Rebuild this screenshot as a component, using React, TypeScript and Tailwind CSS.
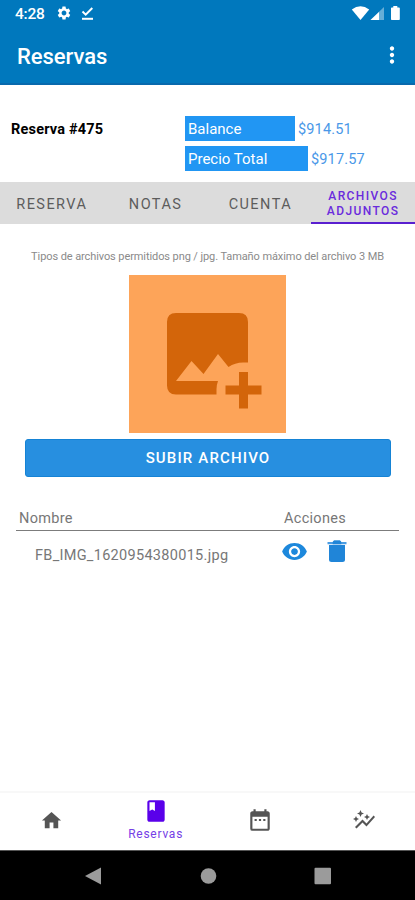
import {
  MdAutoGraph,
  MdBook,
  MdDateRange,
  MdHome,
  MdMoreVert,
  MdSettings,
  MdVisibility,
} from "react-icons/md";

const StatusBar = () => (
  <div className="h-7 flex items-center justify-between pl-[15px] pr-[14px] text-white">
    <div className="flex items-center">
      <span className="w-[41px] text-[15.5px] leading-7 font-medium tracking-[-0.2px]">4:28</span>
      <MdSettings size={16} className="-mt-[2px]" />
      <svg className="ml-[9px] -mt-[1px]" width="13" height="13" viewBox="0 0 13 13" fill="none" stroke="white" strokeWidth="2">
        <path d="M1.5 4.5 4.7 7.6 11.3 1" />
        <path d="M1 11.8h11" />
      </svg>
    </div>
    <svg width="50" height="16" viewBox="0 0 50 16" fill="white">
      <path d="M.8 3.4Q9.5-3 18.2 3.4L9.5 14z" />
      <path d="M33 1v13H19.5z" opacity=".4" />
      <path d="M28 6v8h-8.5z" />
      <path d="M42.3 0h4v1.5H48q.8 0 .8.8v11q0 .8-.8.8h-7.2q-.8 0-.8-.8v-11q0-.8.8-.8h1.5z" />
    </svg>
  </div>
);

const AmountRow = ({ label, value, barClass }: { label: string; value: string; barClass: string }) => (
  <div className="h-[25px] flex items-center text-[15px]">
    <div className={`h-[25px] pl-[3px] leading-[27px] bg-[#2196f3] text-white ${barClass}`}>
      {label}
    </div>
    <span className="pl-[3px] pt-[2px] text-[#4a98e8] text-[14.5px] tracking-[0.15px]">{value}</span>
  </div>
);

const Tabs = () => (
  <div className="h-[42px] grid grid-cols-4 bg-[#dcdcdc] text-[#5c5c5c] text-[14.5px] tracking-[1.45px]">
    <div className="flex items-center justify-center pt-[3px]">RESERVA</div>
    <div className="flex items-center justify-center pt-[3px]">NOTAS</div>
    <div className="flex items-center justify-center pt-[3px] pl-[2px]">CUENTA</div>
    <div className="flex items-center justify-center pt-[3px] text-center text-[12px] leading-[15px] font-medium tracking-[1.4px] text-[#6a2bdc] border-b-2 border-[#5a1fd0]">
      ARCHIVOS
      <br />
      ADJUNTOS
    </div>
  </div>
);

const ImagePlaceholder = () => (
  <svg className="mx-auto" width="157" height="158" viewBox="0 0 157 158">
    <path fill="#fda459" d="M0 0h157v158H0z" />
    <path
      fill="#d3650a"
      fillRule="evenodd"
      d="M47 38h63q9 0 9 9v40.5h-5q-8 0-14.5 4.5L89 79 74.5 99 62.5 86 47 106h42q-1.500 4-1.500 8v5.500H47q-9 0-9-9V47q0-9 9-9z"
    />
    <path fill="#d3650a" d="M110 97h9v13.5h13.5v9H119v14h-9v-14H96.500v-9H110z" />
  </svg>
);

const FileTable = () => (
  <div className="mx-4 mt-[30px] text-[#777777]">
    <div className="h-[23px] flex border-b border-[#7c7c7c] text-[14.5px] leading-[22px] tracking-[0.3px]">
      <span className="w-[268px] pl-[3px]">Nombre</span>
      <span>Acciones</span>
    </div>
    <div className="h-[44px] flex items-center">
      <span className="w-[265px] pl-[19px] pt-[5px] text-[14.5px] tracking-[0.3px]">
        FB_IMG_1620954380015.jpg
      </span>
      <MdVisibility size={27} className="text-[#1d88dc] -mt-[3px]" />
      <svg className="ml-[19px] -mt-[4px]" width="20" height="22" viewBox="0 0 20 22">
        <path fill="#2085d8" d="M2 5h16v14.500q0 2.500-2.500 2.500h-11Q2 22 2 19.500z" />
        <path fill="#4b9de3" d="M.5 2h5.200L7 .5h6L14.300 2h5.200v2.300H.5z" />
        <path fill="#2085d8" d="M7 .5h6L14.300 2v2.300H5.700V2z" />
      </svg>
    </div>
  </div>
);

const BottomNav = () => (
  <div className="h-[59px] grid grid-cols-4 items-center justify-items-center pb-[3px] bg-white border-t-2 border-[#f8f8f8] text-[#555555]">
    <MdHome size={23} />
    <div className="flex flex-col items-center text-[#5a00ea]">
      <MdBook size={26} />
      <span className="text-[12px] leading-[15px] mt-[3px] tracking-[0.75px] text-[#7540e6]">Reservas</span>
    </div>
    <MdDateRange size={26} className="ml-[1px]" />
    <MdAutoGraph size={24} className="ml-[1px]" />
  </div>
);

const SystemNav = () => (
  <div className="h-[50px] bg-black border-t border-[#555555] flex items-center justify-center">
    <svg width="246" height="18" viewBox="0 0 246 18" fill="#9b9b9b">
      <path d="M0 9 16 .5v17z" />
      <circle cx="123.5" cy="9" r="7.8" />
      <rect x="229.5" y=".8" width="16.5" height="16.5" rx="1" />
    </svg>
  </div>
);

const App = () => {
  return (
    <div className="w-full h-[900px] flex flex-col bg-white font-['Roboto',sans-serif] overflow-hidden">
      <header className="h-[85px] bg-[#0078bd] border-b-2 border-[#0869ad]">
        <StatusBar />
        <div className="h-[57px] flex items-center justify-between pl-[17px] pr-[10px] text-white">
          <h1 className="text-[22px] font-medium tracking-[-0.05px]">Reservas</h1>
          <MdMoreVert size={26} className="-mt-[3px]" />
        </div>
      </header>

      <div className="h-[97px] flex pt-[31px]">
        <h2 className="w-[185px] pl-[11px] text-[14.5px] leading-[27px] font-bold tracking-[0.2px] text-black">
          Reserva #475
        </h2>
        <div className="flex flex-col gap-[5px]">
          <AmountRow label="Balance" value="$914.51" barClass="w-[110px]" />
          <AmountRow label="Precio Total" value="$917.57" barClass="w-[123px]" />
        </div>
      </div>

      <Tabs />

      <main className="flex-1">
        <p className="pt-[24px] pb-[10px] text-center text-[11px] leading-[17px] tracking-[-0.09px] text-[#8a8a8a]">
          Tipos de archivos permitidos png / jpg. Tamaño máximo del archivo 3 MB
        </p>
        <ImagePlaceholder />
        <button
          type="button"
          className="block w-[366px] h-[38px] ml-[25px] mt-[6px] mb-[31px] rounded-[3px] bg-[#278fe0] border border-[#1583d5] text-white text-[15px] font-medium tracking-[1.15px]"
        >
          SUBIR ARCHIVO
        </button>
        <FileTable />
      </main>

      <BottomNav />
      <SystemNav />
    </div>
  );
};

export default App;
